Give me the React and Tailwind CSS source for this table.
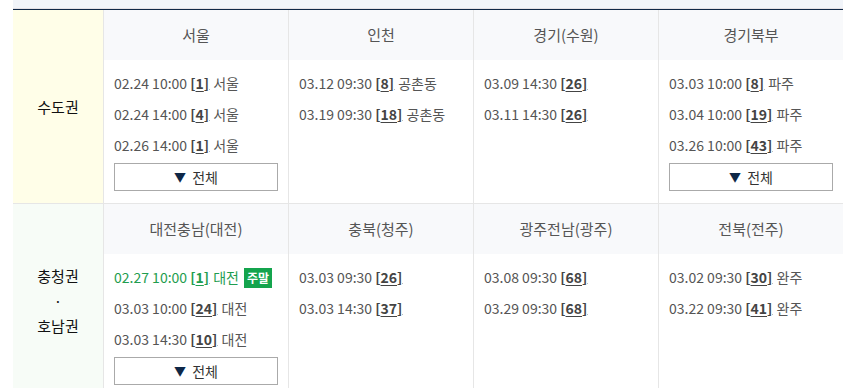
import React from "react";

const FONT = { fontFamily: '"Noto Sans CJK KR", "Noto Sans", sans-serif' };

const rows = [
  {
    label: ["수도권"],
    labelBg: "bg-[#fffee8]",
    cols: [
      {
        name: "서울",
        items: [
          { d: "02.24 10:00", n: "1", p: "서울" },
          { d: "02.24 14:00", n: "4", p: "서울" },
          { d: "02.26 14:00", n: "1", p: "서울" },
        ],
        more: true,
      },
      {
        name: "인천",
        items: [
          { d: "03.12 09:30", n: "8", p: "공촌동" },
          { d: "03.19 09:30", n: "18", p: "공촌동" },
        ],
      },
      {
        name: "경기(수원)",
        items: [
          { d: "03.09 14:30", n: "26", p: "" },
          { d: "03.11 14:30", n: "26", p: "" },
        ],
      },
      {
        name: "경기북부",
        items: [
          { d: "03.03 10:00", n: "8", p: "파주" },
          { d: "03.04 10:00", n: "19", p: "파주" },
          { d: "03.26 10:00", n: "43", p: "파주" },
        ],
        more: true,
      },
    ],
  },
  {
    label: ["충청권", "·", "호남권"],
    labelBg: "bg-[#f7fcf7]",
    cols: [
      {
        name: "대전충남(대전)",
        items: [
          { d: "02.27 10:00", n: "1", p: "대전", weekend: true },
          { d: "03.03 10:00", n: "24", p: "대전" },
          { d: "03.03 14:30", n: "10", p: "대전" },
        ],
        more: true,
      },
      {
        name: "충북(청주)",
        items: [
          { d: "03.03 09:30", n: "26", p: "" },
          { d: "03.03 14:30", n: "37", p: "" },
        ],
      },
      {
        name: "광주전남(광주)",
        items: [
          { d: "03.08 09:30", n: "68", p: "" },
          { d: "03.29 09:30", n: "68", p: "" },
        ],
      },
      {
        name: "전북(전주)",
        items: [
          { d: "03.02 09:30", n: "30", p: "완주" },
          { d: "03.22 09:30", n: "41", p: "완주" },
        ],
      },
    ],
  },
];

function Entry({ it }) {
  const green = it.weekend;
  return (
    <div className={`h-[31px] flex items-center text-[14px] whitespace-nowrap ${green ? "text-[#1f9d4f]" : "text-[#555]"}`}>
      <span>{it.d}&nbsp;</span>
      <span className={`font-bold ${green ? "text-[#1f9d4f]" : "text-[#444]"}`}>
        [<span className="underline underline-offset-2">{it.n}</span>]
      </span>
      <span className="inline-block w-[1px] h-[1px] bg-[#bbb] self-end mb-[9px]"></span>
      {it.p && <span>&nbsp;{it.p}</span>}
      {green && (
        <span className="ml-[5px] bg-[#14a44d] text-white text-[12px] font-bold px-[3px] h-[20px] leading-[20px]">
          주말
        </span>
      )}
    </div>
  );
}

export default function App() {
  return (
    <div className="w-[852px] h-[388px] bg-white overflow-hidden" style={FONT}>
      <div className="ml-[13px] w-[830px]">
        <div className="h-[9px] bg-[#f1f4f9] border-b border-[#e4e0e4]"></div>
        <div className="border-t border-[#0e2747]">
          {rows.map((r, ri) => (
            <div
              key={ri}
              className="grid grid-cols-[91px_185px_185px_185px_184px] border-b border-[#e6e6e6]"
            >
              <div className={`${r.labelBg} border-r border-[#e6e6e6] flex flex-col items-center justify-center text-[15px] text-[#111]`}>
                {r.label.map((l, i) => (
                  <div key={i} className="leading-[25px]">{l}</div>
                ))}
              </div>
              {r.cols.map((c, ci) => (
                <div key={ci} className={`${ci < 3 ? "border-r border-[#e6e6e6]" : ""} flex flex-col`}>
                  <div className="h-[50px] bg-[#f8f9fb] flex items-center justify-center text-[15px] text-[#555]">
                    {c.name}
                  </div>
                  <div className="pt-[8px] px-[10px] pb-[12px]">
                    {c.items.map((it, ii) => (
                      <Entry key={ii} it={it} />
                    ))}
                    {c.more && (
                      <div className="mt-[2px] h-[28px] border border-[#aaa] flex items-center justify-center gap-[6px] text-[14px] text-[#333]">
                        <span className="text-[#0e2747] text-[12px]">▼</span>
                        <span>전체</span>
                      </div>
                    )}
                  </div>
                </div>
              ))}
            </div>
          ))}
        </div>
      </div>
    </div>
  );
}
